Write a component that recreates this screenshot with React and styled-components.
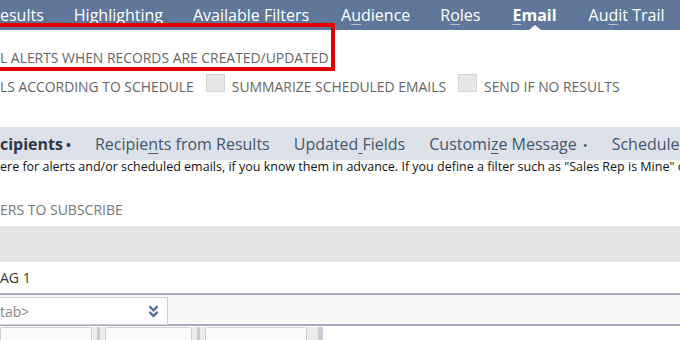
import React from "react";
import styled, { createGlobalStyle, css } from "styled-components";
import { FaAngleDoubleDown } from "react-icons/fa";

const GlobalStyle = createGlobalStyle`
  html, body {
    margin: 0;
    padding: 0;
    background: #fff;
  }
  body {
    width: 680px;
    height: 340px;
    overflow: hidden;
    font-family: "Open Sans", "Liberation Sans", sans-serif;
  }
`;

const Page = styled.div`
  position: relative;
  width: 680px;
  height: 340px;
  overflow: hidden;
  white-space: nowrap;
`;

const NavBar = styled.div`
  display: flex;
  align-items: center;
  gap: 30px;
  height: 30px;
  background: #607799;
`;

const NavItem = styled.div`
  position: relative;
  color: #fff;
  font-size: 16px;
  line-height: 30px;
  margin-left: ${(p) => p.$ml || 0}px;
  font-weight: ${(p) => (p.$active ? 700 : 400)};
  ${(p) =>
    p.$active &&
    css`
      &::after {
        content: "";
        position: absolute;
        left: 50%;
        bottom: 0;
        margin-left: -6px;
        border-left: 6px solid transparent;
        border-right: 6px solid transparent;
        border-bottom: 5px solid #fff;
      }
    `}
`;

const Key = styled.span`
  text-decoration: underline;
  text-decoration-thickness: 1px;
  text-underline-offset: 3px;
  text-decoration-color: ${(p) => p.$color || "rgba(255,255,255,0.55)"};
`;

// red annotation frame drawn over the screenshot
const Callout = styled.div`
  position: absolute;
  top: 23px;
  left: -10px;
  width: 345px;
  height: 48px;
  box-sizing: border-box;
  border: 4px solid #e00000;
  pointer-events: none;
`;

const Options = styled.div`
  display: flex;
  flex-direction: column;
  gap: 4px;
  padding-top: 16px;
`;

const CheckRow = styled.div`
  display: flex;
  align-items: center;
  height: 22px;
`;

const CheckLabel = styled.span`
  color: #666;
  font-size: 13.9px;
  text-transform: uppercase;
  margin-right: 12px;
  margin-top: ${(p) => (p.$low ? "6px" : "0")};
`;

const CheckBox = styled.span`
  display: inline-block;
  width: 19px;
  height: 18px;
  box-sizing: border-box;
  background: #e7e7e7;
  border: 1px solid #d4d4d4;
  margin-right: 7px;
`;

const SubTabs = styled.div`
  display: flex;
  align-items: center;
  gap: 24px;
  height: 33px;
  margin-top: 33px;
  background: #dde2ea;
`;

const SubTab = styled.span`
  font-size: 16px;
  color: ${(p) => (p.$active ? "#2d3748" : "#45566f")};
  font-weight: ${(p) => (p.$active ? 700 : 400)};
`;

const Dot = styled.span`
  font-size: 13px;
  margin-left: ${(p) => p.$ml ?? 6}px;
`;

const Hint = styled.div`
  font-size: 12.5px;
  line-height: 14px;
  color: #111;
  overflow: hidden;
`;

const FieldLabel = styled.div`
  margin-top: 28px;
  font-size: 14px;
  line-height: 16px;
  color: #777;
  text-transform: uppercase;
`;

const GrayBand = styled.div`
  height: 36px;
  margin-top: 8px;
  background: #e5e5e5;
`;

const ValueRow = styled.div`
  display: flex;
  align-items: center;
  height: 31px;
  font-size: 14px;
  color: #333;
  border-bottom: 2px solid #a3abb9;
`;

const EditRow = styled.div`
  height: 31px;
  padding-top: 2px;
  box-sizing: border-box;
  background: #f8f8f8;
  border-bottom: 2px solid #a6a9be;
`;

const Select = styled.div`
  display: flex;
  align-items: center;
  justify-content: space-between;
  width: 168px;
  height: 28px;
  box-sizing: border-box;
  padding-right: 6px;
  background: #fff;
  border: 1px solid #cfcfcf;
  border-left: none;
  font-size: 14px;
  color: #888;
`;

const ButtonBar = styled.div`
  display: flex;
  width: 318px;
  height: 20px;
  margin-top: 1px;
  background: #ebebeb;
  border-right: 5px solid #c9ccd4;
`;

const Button = styled.div`
  width: ${(p) => p.$w}px;
  height: 20px;
  box-sizing: border-box;
  margin-left: ${(p) => p.$ml || 0}px;
  background: #fafafa;
  border: 1px solid #cfcfcf;
  border-radius: 3px;
`;

const Sep = styled.div`
  width: 3px;
  margin-left: 5px;
  background: #cbcbcb;
`;

export default function App() {
  return (
    <Page>
      <GlobalStyle />
      <NavBar>
        <NavItem>esults</NavItem>
        <NavItem>
          <Key>H</Key>ighlighting
        </NavItem>
        <NavItem>
          <Key>A</Key>vailable Filters
        </NavItem>
        <NavItem $ml={2}>
          A<Key>u</Key>dience
        </NavItem>
        <NavItem>
          R<Key>o</Key>les
        </NavItem>
        <NavItem $ml={2} $active>
          <Key>E</Key>mail
        </NavItem>
        <NavItem $ml={2}>
          Au<Key>d</Key>it Trail
        </NavItem>
      </NavBar>

      <Options>
        <CheckRow>
          <CheckLabel>l alerts when records are created/updated</CheckLabel>
        </CheckRow>
        <CheckRow>
          <CheckLabel $low>ls according to schedule</CheckLabel>
          <CheckBox />
          <CheckLabel $low>Summarize scheduled emails</CheckLabel>
          <CheckBox />
          <CheckLabel $low>Send if no results</CheckLabel>
        </CheckRow>
      </Options>

      <SubTabs>
        <SubTab $active>
          cipients<Dot $ml={3}>•</Dot>
        </SubTab>
        <SubTab>
          Recipie<Key $color="#45566f">n</Key>ts from Results
        </SubTab>
        <SubTab>
          Updated<Key $color="#45566f"> </Key>Fields
        </SubTab>
        <SubTab>
          Customi<Key $color="#45566f">z</Key>e Message<Dot>•</Dot>
        </SubTab>
        <SubTab>Schedule</SubTab>
      </SubTabs>

      <Hint>
        ere for alerts and/or scheduled emails, if you know them in advance. If you define a
        filter such as "Sales Rep is Mine" o
      </Hint>

      <FieldLabel>ers to subscribe</FieldLabel>
      <GrayBand />
      <ValueRow>AG 1</ValueRow>
      <EditRow>
        <Select>
          tab&gt;
          <FaAngleDoubleDown size={15} color="#55709a" />
        </Select>
      </EditRow>
      <ButtonBar>
        <Button $w={92} />
        <Sep />
        <Button $w={87} $ml={5} />
        <Sep />
        <Button $w={102} $ml={5} />
      </ButtonBar>

      <Callout />
    </Page>
  );
}
